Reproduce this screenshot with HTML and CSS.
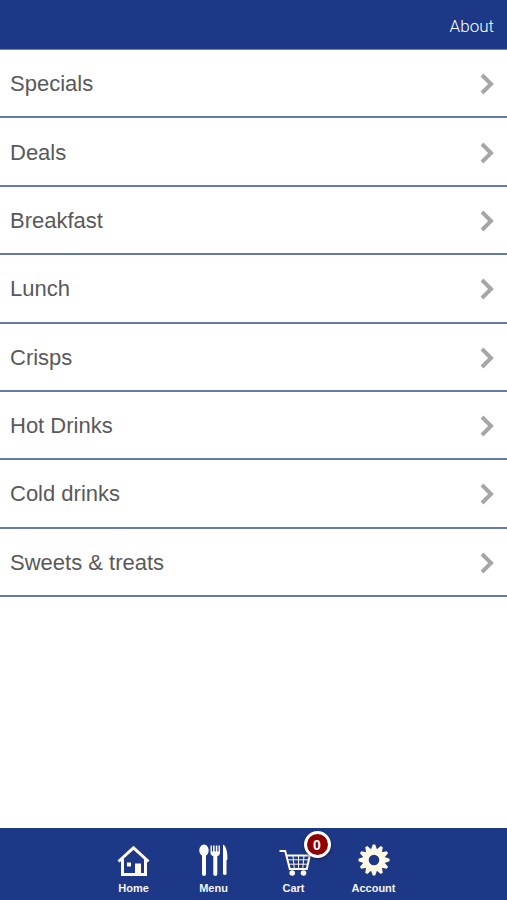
FILE: index.html
```
<!DOCTYPE html>
<html lang="en">
<head>
<meta charset="UTF-8">
<meta name="viewport" content="width=device-width, initial-scale=1.0">
<title>Menu</title>
<link rel="stylesheet" href="styles.css">
</head>
<body>

<header class="topbar">
  <a href="#about">About</a>
</header>

<main>
  <ul class="categories">
    <li><a href="#specials">Specials <svg class="chevron" viewBox="0 0 14 22"><path d="M2 2l9 9-9 9"/></svg></a></li>
    <li><a href="#deals">Deals <svg class="chevron" viewBox="0 0 14 22"><path d="M2 2l9 9-9 9"/></svg></a></li>
    <li><a href="#breakfast">Breakfast <svg class="chevron" viewBox="0 0 14 22"><path d="M2 2l9 9-9 9"/></svg></a></li>
    <li><a href="#lunch">Lunch <svg class="chevron" viewBox="0 0 14 22"><path d="M2 2l9 9-9 9"/></svg></a></li>
    <li><a href="#crisps">Crisps <svg class="chevron" viewBox="0 0 14 22"><path d="M2 2l9 9-9 9"/></svg></a></li>
    <li><a href="#hot-drinks">Hot Drinks <svg class="chevron" viewBox="0 0 14 22"><path d="M2 2l9 9-9 9"/></svg></a></li>
    <li><a href="#cold-drinks">Cold drinks <svg class="chevron" viewBox="0 0 14 22"><path d="M2 2l9 9-9 9"/></svg></a></li>
    <li><a href="#sweets">Sweets &amp; treats <svg class="chevron" viewBox="0 0 14 22"><path d="M2 2l9 9-9 9"/></svg></a></li>
  </ul>
</main>

<nav class="tabbar">
  <a href="#home">
    <svg class="icon" viewBox="0 0 34 34">
      <path class="line" d="M1.500 18.500L16.500 4.800l15 13.700M5.500 16v15.500h23V16"/>
      <path d="M18 20.500h6v11h-6zM10 19.500h4v4h-4z"/>
    </svg>
    Home
  </a>
  <a href="#menu">
    <svg class="icon white" viewBox="0 0 34 34">
      <path d="M7 1.500c2.700 0 4.700 3 4.700 6 0 2.500-1.400 4.300-2.700 5V31a2 2 0 0 1-4 0V12.500c-1.300-.7-2.700-2.500-2.700-5 0-3 2-6 4.700-6z"/>
      <path d="M13.500 2.500h1.400v6h1.200v-6h1.500v6h1.200v-6h1.500v6h1.200v-6h1.400v7.500c0 1.700-1.200 2.800-2.600 3.300V31a2 2 0 0 1-4 0V13.300c-1.500-.5-2.800-1.600-2.800-3.300z"/>
      <path d="M26 1.500c2.700 1 4.500 6 4.500 14.500l-1 1.500V31a2 2 0 0 1-3.500 0z"/>
    </svg>
    Menu
  </a>
  <a href="#cart">
    <svg class="icon" viewBox="0 0 34 34">
      <path class="line thin" d="M2.500 8h5.700l4.600 18h17l3-13.500H9.500"/>
      <path class="line grid" d="M10.500 16.800h21M11.500 21.200h19M16 12.500l1.300 13.500M21.500 12.500V26M27 12.500L25.700 26"/>
      <circle cx="15.200" cy="30" r="2.800"/>
      <circle cx="26.500" cy="30" r="2.800"/>
    </svg>
    Cart
    <span class="badge">0</span>
  </a>
  <a href="#account">
    <svg class="icon" viewBox="0 0 34 34">
      <circle class="ring" cx="17" cy="17" r="8.300"/>
      <g id="teeth">
        <path id="tooth" d="M14 6.500L15.800 1.500h2.400L20 6.500zM14 27.500l1.800 5h2.400l1.800-5z"/>
        <use href="#tooth" transform="rotate(30 17 17)"/>
        <use href="#tooth" transform="rotate(60 17 17)"/>
        <use href="#tooth" transform="rotate(90 17 17)"/>
        <use href="#tooth" transform="rotate(120 17 17)"/>
        <use href="#tooth" transform="rotate(150 17 17)"/>
      </g>
    </svg>
    Account
  </a>
</nav>

</body>
</html>
```
FILE: styles.css
```
* {
  box-sizing: border-box;
}

body {
  margin: 0;
  min-height: 100vh;
  display: flex;
  flex-direction: column;
  background-color: #fff;
  font-family: "Liberation Sans", Arial, sans-serif;
}

a {
  text-decoration: none;
}

.topbar {
  display: flex;
  justify-content: flex-end;
  align-items: center;
  height: 50px;
  padding: 2px 13px 0;
  background-color: #1d3886;
  border-bottom: 1px solid #7384b8;
}

.topbar a {
  color: #fff;
  font-family: Roboto, sans-serif;
  font-size: 17px;
  font-weight: 300;
}

main {
  flex: 1;
}

/* eight equal rows */
.categories {
  display: grid;
  grid-auto-rows: 1fr;
  min-height: 547px;
  margin: 0;
  padding: 0;
  list-style: none;
}

.categories li {
  display: flex;
  border-bottom: 2px solid #6778af;
}

.categories a {
  flex: 1;
  display: flex;
  justify-content: space-between;
  align-items: center;
  padding: 2px 13px 0 10px;
  color: #595959;
  font-size: 22px;
}

.chevron {
  width: 14px;
  height: 22px;
  fill: none;
  stroke: #a6a6a6;
  stroke-width: 4;
}

.tabbar {
  position: sticky;
  bottom: 0;
  display: flex;
  justify-content: center;
  height: 72px;
  background-color: #1d3886;
}

.tabbar a {
  position: relative;
  display: flex;
  flex-direction: column;
  align-items: center;
  gap: 4px;
  width: 80px;
  padding-top: 15px;
  color: #f4f4f4;
  font-size: 11px;
  font-weight: bold;
  line-height: 14px;
}

.icon {
  width: 34px;
  height: 34px;
  fill: #fff9e6;
}

.white {
  fill: #fff;
}

.line {
  fill: none;
  stroke: #fff9e6;
  stroke-width: 3;
}

.thin {
  stroke-width: 2;
}

.grid {
  stroke-width: 1;
}

.ring {
  fill: none;
  stroke: #fff9e6;
  stroke-width: 6;
}

.badge {
  position: absolute;
  top: 3px;
  left: 50px;
  width: 27px;
  height: 27px;
  border: 3px solid #fff;
  border-radius: 50%;
  background-color: #8f0000;
  box-shadow: 0 1px 3px rgba(0, 0, 0, 0.5);
  color: #fff;
  font-size: 14px;
  line-height: 22px;
  text-align: center;
}
```
